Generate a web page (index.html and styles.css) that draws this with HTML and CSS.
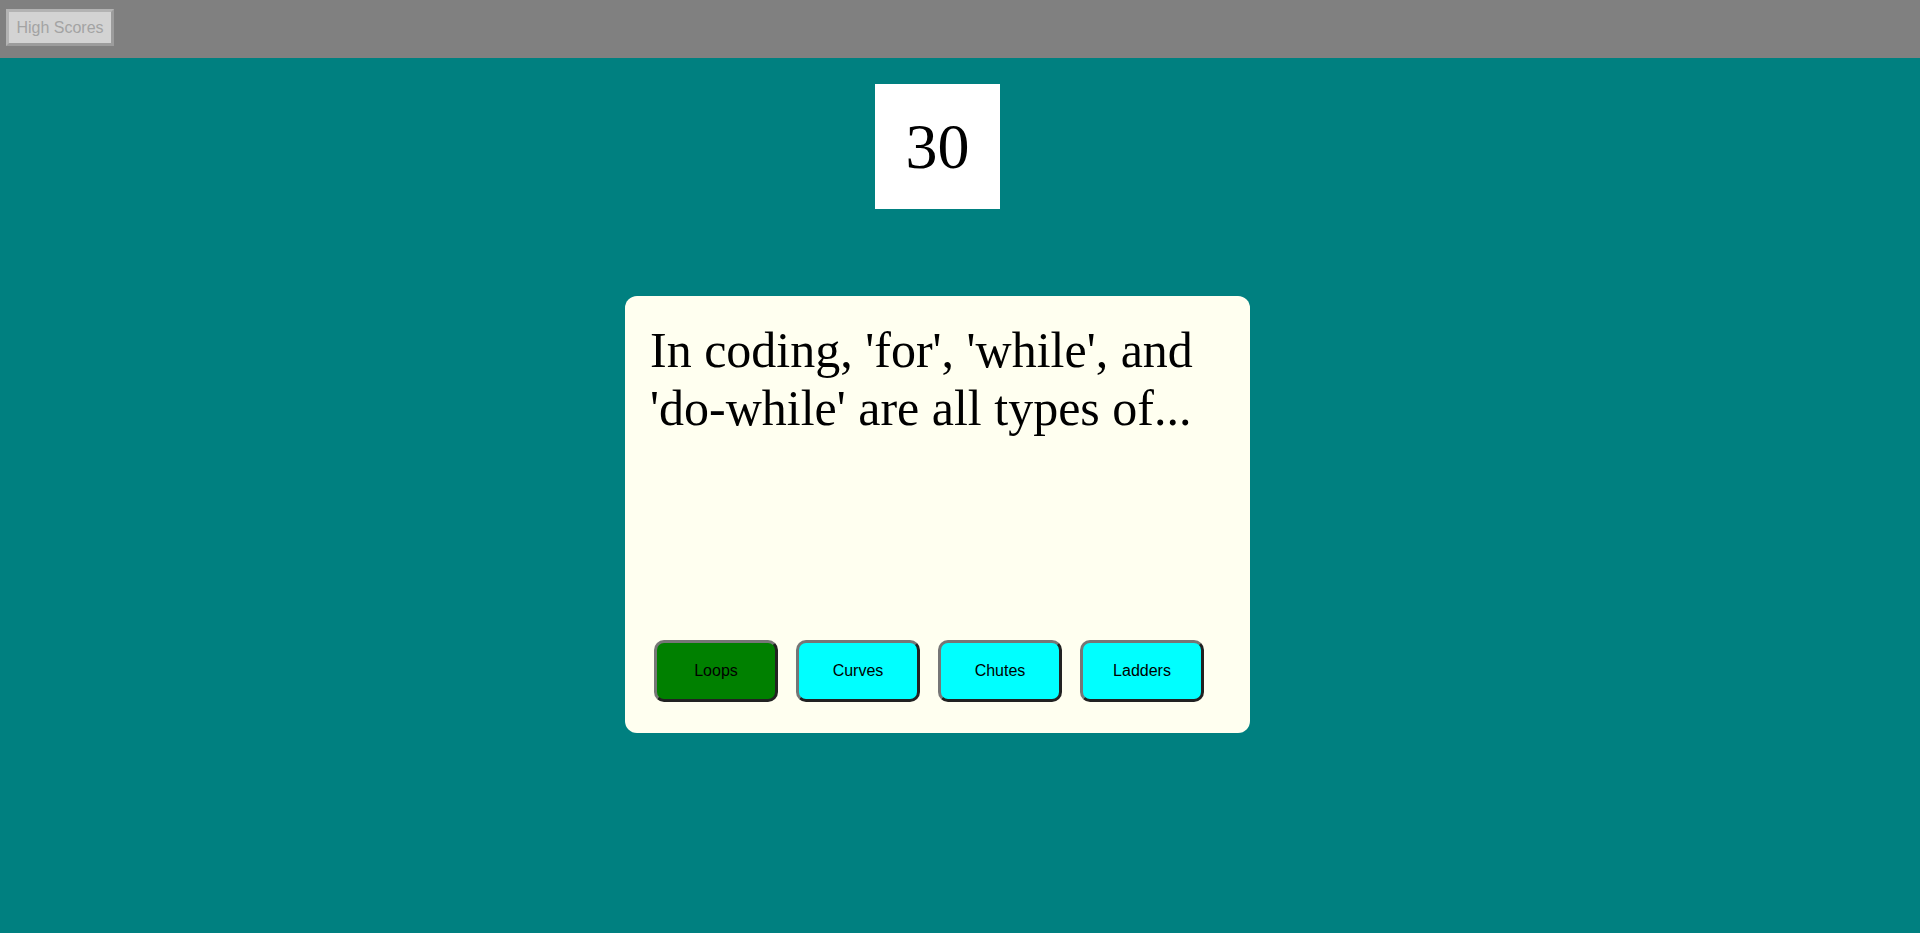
FILE: index.html
```html
<!DOCTYPE html>
<html lang="en">
<head>
<meta charset="utf-8">
<title>Quiz</title>
<link rel="stylesheet" href="styles.css">
</head>
<body>
<header class="topbar">
  <button class="scores-btn" disabled>High Scores</button>
</header>
<main class="main">
  <div class="timer">30</div>
  <section class="card">
    <p class="question">In coding, 'for', 'while', and 'do-while' are all types of...</p>
    <div class="answers">
      <button class="answer answer-correct">Loops</button>
      <button class="answer">Curves</button>
      <button class="answer">Chutes</button>
      <button class="answer">Ladders</button>
    </div>
  </section>
</main>
</body>
</html>
```

FILE: styles.css
```css
html, body {
  margin: 0;
  padding: 0;
}

body {
  background: #008080;
  min-height: 933px;
  font-family: "Liberation Serif", "Times New Roman", serif;
}

.topbar {
  background: #808080;
  height: 58px;
  box-sizing: border-box;
  padding: 9px 6px;
  display: flex;
  align-items: flex-start;
}

.scores-btn {
  font-family: "Liberation Sans", Arial, sans-serif;
  font-size: 16px;
  line-height: 19px;
  color: #a3a3a3;
  background: #d3d3d3;
  border: 3px solid;
  border-color: #b3b3b3 #9c9c9c #9c9c9c #b3b3b3;
  padding: 6px 0;
  margin: 0;
  width: 108px;
  height: 37px;
  box-sizing: border-box;
  text-align: center;
}

.main {
  width: 1875px;
  display: flex;
  flex-direction: column;
  align-items: center;
  padding-top: 26px;
}

.timer {
  width: 125px;
  height: 125px;
  background: #ffffff;
  display: flex;
  align-items: center;
  justify-content: center;
  font-size: 64px;
  color: #000;
}

.card {
  margin-top: 87px;
  width: 625px;
  height: 437px;
  box-sizing: border-box;
  background: #fffff0;
  border-radius: 12px;
  padding: 25px;
}

.question {
  margin: 0;
  height: 319px;
  font-size: 50px;
  color: #000;
}

.answers {
  display: flex;
  gap: 18px;
  padding-left: 4px;
}

.answer {
  width: 124px;
  height: 62px;
  box-sizing: border-box;
  margin: 0;
  padding: 0;
  border: 3px solid;
  border-color: #767676 #222222 #222222 #767676;
  border-radius: 10px;
  background: #00ffff;
  color: #000;
  font-family: "Liberation Sans", Arial, sans-serif;
  font-size: 16px;
}

.answer-correct {
  background: #008000;
}
```
